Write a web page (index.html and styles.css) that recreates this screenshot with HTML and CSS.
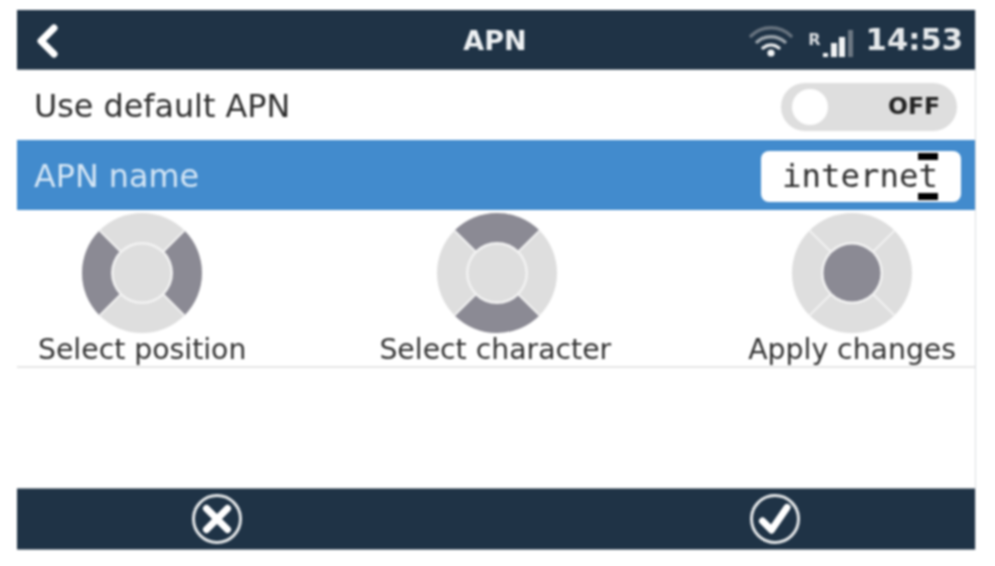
FILE: index.html
```html
<!DOCTYPE html>
<html lang="en">
<head>
<meta charset="utf-8">
<title>APN</title>
<link rel="stylesheet" href="styles.css">
</head>
<body>
<main class="frame">
  <header class="topbar">
    <svg class="back" viewBox="0 0 24 34" aria-hidden="true"><path d="M19 4 6 17l13 13"/></svg>
    <h1 class="title">APN</h1>
    <div class="status">
      <svg class="wifi" viewBox="0 0 44 32" aria-hidden="true">
        <path class="wifi-far" d="M2 11C13 0 31 0 42 11"/>
        <path class="wifi-mid" d="M8 17c8-7 20-7 28 0"/>
        <path class="wifi-near" d="M14 23c5-4 11-4 16 0"/>
        <circle class="wifi-dot" cx="22" cy="28" r="3.6"/>
      </svg>
      <span class="roam">R</span>
      <svg class="bars" viewBox="0 0 31 27" aria-hidden="true">
        <rect class="bar" x="0" y="23" width="5" height="4"/>
        <rect class="bar" x="8" y="13" width="6" height="14"/>
        <rect class="bar" x="16" y="7" width="6" height="20"/>
        <rect class="bar-off" x="25" y="0" width="5" height="27"/>
      </svg>
      <span class="clock">14:53</span>
    </div>
  </header>

  <section class="row">
    <span class="row-label">Use default APN</span>
    <div class="toggle"><span class="knob"></span><span class="toggle-text">OFF</span></div>
  </section>

  <section class="row row-active">
    <span class="row-label">APN name</span>
    <div class="field">
      <span class="field-text">internet</span>
      <span class="caret caret-top"></span>
      <span class="caret caret-bottom"></span>
    </div>
  </section>

  <section class="hints">
    <figure class="hint">
      <svg class="pad" viewBox="0 0 120 120" aria-hidden="true">
        <circle class="off" cx="60" cy="60" r="60"/>
        <path class="on" d="M17.6 17.6A60 60 0 0 0 17.6 102.4L38.8 81.2A30 30 0 0 1 38.8 38.8Z"/>
        <path class="on" d="M102.4 17.6A60 60 0 0 1 102.4 102.4L81.2 81.2A30 30 0 0 0 81.2 38.8Z"/>
        <path class="gaps" d="M17.6 17.6 38.8 38.8M102.4 17.6 81.2 38.8M17.6 102.4 38.8 81.2M102.4 102.4 81.2 81.2"/>
        <circle class="ring" cx="60" cy="60" r="31"/>
        <circle class="off" cx="60" cy="60" r="28.5"/>
      </svg>
      <figcaption class="hint-label">Select position</figcaption>
    </figure>
    <figure class="hint hint-mid">
      <svg class="pad" viewBox="0 0 120 120" aria-hidden="true">
        <circle class="off" cx="60" cy="60" r="60"/>
        <path class="on" d="M17.6 17.6A60 60 0 0 1 102.4 17.6L81.2 38.8A30 30 0 0 0 38.8 38.8Z"/>
        <path class="on" d="M17.6 102.4A60 60 0 0 0 102.4 102.4L81.2 81.2A30 30 0 0 1 38.8 81.2Z"/>
        <path class="gaps" d="M17.6 17.6 38.8 38.8M102.4 17.6 81.2 38.8M17.6 102.4 38.8 81.2M102.4 102.4 81.2 81.2"/>
        <circle class="ring" cx="60" cy="60" r="31"/>
        <circle class="off" cx="60" cy="60" r="28.5"/>
      </svg>
      <figcaption class="hint-label">Select character</figcaption>
    </figure>
    <figure class="hint">
      <svg class="pad" viewBox="0 0 120 120" aria-hidden="true">
        <circle class="off" cx="60" cy="60" r="60"/>
        <path class="gaps" d="M17.6 17.6 38.8 38.8M102.4 17.6 81.2 38.8M17.6 102.4 38.8 81.2M102.4 102.4 81.2 81.2"/>
        <circle class="ring" cx="60" cy="60" r="31"/>
        <circle class="on" cx="60" cy="60" r="28.5"/>
      </svg>
      <figcaption class="hint-label">Apply changes</figcaption>
    </figure>
  </section>

  <div class="spacer"></div>

  <footer class="bottombar">
    <svg class="action" viewBox="0 0 52 52" aria-hidden="true">
      <circle class="action-ring" cx="26" cy="26" r="23.5"/>
      <path class="action-mark" d="M15.5 15.5 36.5 36.5M36.5 15.5 15.5 36.5"/>
    </svg>
    <svg class="action" viewBox="0 0 52 52" aria-hidden="true">
      <circle class="action-ring" cx="26" cy="26" r="23.5"/>
      <path class="action-mark" d="M13.5 28 22.5 37 38 14.5"/>
    </svg>
  </footer>
</main>
</body>
</html>
```

FILE: styles.css
```css
* { box-sizing: border-box; }

html, body { margin: 0; background: #fff; }

body {
  width: 995px;
  height: 566px;
  overflow: hidden;
  padding: 10px 0 0 17px;
  font-family: "DejaVu Sans", sans-serif;
}

.frame {
  width: 959px;
  height: 540px;
  display: flex;
  flex-direction: column;
  border-right: 1px solid #dcdfe2;
  background: #fff;
  filter: blur(1px);
}

.topbar {
  flex: 0 0 60px;
  display: grid;
  grid-template-columns: 1fr auto 1fr;
  align-items: center;
  padding: 0 12px 0 18px;
  background: #1f3346;
  border-bottom: 1px solid #6f7b86;
  color: #fff;
}

.back { width: 24px; height: 34px; margin-top: 2px; fill: none; stroke: #fff; stroke-width: 7; stroke-linecap: round; stroke-linejoin: round; }

.title { margin: 2px 8px 0 0; font-size: 27px; font-weight: 700; line-height: 1; color: #eef1f3; }

.status { display: flex; align-items: center; justify-content: flex-end; }

.wifi { width: 44px; height: 32px; margin: 2px 1px 0 0; fill: none; stroke-width: 3.4; stroke-linecap: round; }
.wifi-far { stroke: #66727e; }
.wifi-mid { stroke: #9aa3ab; }
.wifi-near { stroke: #e6e9eb; }
.wifi-dot { fill: #f2f4f5; stroke: none; }

.roam { margin: 0 0 0 14px; font-size: 16px; font-weight: 700; line-height: 1; color: #d6dade; }

.bars { width: 31px; height: 27px; margin: 7px 0 0 2px; }
.bar { fill: #f0f2f3; }
.bar-off { fill: #6d7883; }

.clock { margin: 2px 0 0 12px; font-size: 30.6px; font-weight: 700; line-height: 1; color: #e6e9eb; }

.row {
  flex: 0 0 70px;
  display: flex;
  align-items: center;
  justify-content: space-between;
  padding: 0 18px 0 17px;
  background: #fff;
}

.row-label { font-size: 31.8px; line-height: 1; color: #2e2e2e; margin-top: 1px; }

.row-active { background: #428bcd; padding-right: 14px; }
.row-active .row-label { color: #d5e6f5; }

.toggle {
  position: relative;
  width: 176px;
  height: 48px;
  margin-top: 4px;
  display: flex;
  align-items: center;
  justify-content: flex-end;
  padding-right: 17px;
  border-radius: 24px;
  background: #dedede;
}

.knob {
  position: absolute;
  left: 11px;
  top: 6px;
  width: 36px;
  height: 36px;
  border-radius: 50%;
  background: #fff;
}

.toggle-text { font-size: 23.5px; font-weight: 700; line-height: 1; color: #222; }

.field {
  position: relative;
  width: 200px;
  height: 51px;
  margin-top: 2px;
  display: flex;
  align-items: center;
  padding-left: 21px;
  border-radius: 8px;
  background: #fff;
}

.field-text {
  font-family: "DejaVu Sans Mono", monospace;
  font-size: 32.4px;
  line-height: 1;
  color: #2e2e2e;
}

.caret { position: absolute; left: 157px; width: 20px; height: 7px; background: #000; }
.caret-top { top: 2px; }
.caret-bottom { bottom: 2px; }

.hints {
  flex: 0 0 158px;
  display: flex;
  justify-content: space-between;
  padding: 3px 19px 0 21px;
  border-bottom: 2px solid #e6e6e6;
}

.hint {
  margin: 0;
  display: flex;
  flex-direction: column;
  align-items: center;
}

.hint-mid { margin-right: 4px; }
.hint-mid .pad { margin-left: 4px; }

.pad { width: 120px; height: 120px; }
.off { fill: #dedede; }
.on { fill: #8b8a94; }
.gaps { fill: none; stroke: #f2f2f2; stroke-width: 2; }
.ring { fill: #f2f2f2; }

.hint-label { margin-top: 1px; font-size: 28.3px; line-height: 32px; color: #333; white-space: nowrap; }

.spacer { flex: 1; }

.bottombar {
  flex: 0 0 62px;
  display: flex;
  align-items: center;
  justify-content: space-between;
  padding: 0 174px;
  background: #1f3346;
  border-top: 1px solid #8a929a;
  border-bottom: 1px solid #8a929a;
}

.action { width: 52px; height: 52px; fill: none; }
.action-ring { stroke: #e3e6e8; stroke-width: 3; }
.action-mark { stroke: #fff; stroke-width: 7; stroke-linecap: round; stroke-linejoin: round; }
```
